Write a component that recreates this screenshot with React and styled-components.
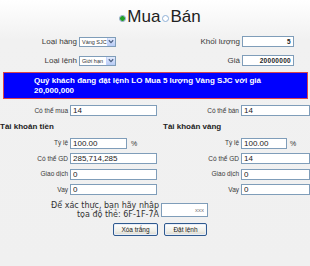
import React from 'react';
import styled, { createGlobalStyle } from 'styled-components';

const Global = createGlobalStyle`
  html, body { margin: 0; padding: 0; }
  body {
    width: 310px;
    height: 266px;
    overflow: hidden;
    background: linear-gradient(#ffffff 0px, #f1f1f1 40px, #f0f0f0 100%);
    font-family: "Liberation Sans", Arial, sans-serif;
    color: #333;
  }
`;

const Page = styled.div`
  width: 310px;
  height: 266px;
  display: flex;
  flex-direction: column;
`;

const Title = styled.div`
  display: flex;
  justify-content: center;
  align-items: baseline;
  box-sizing: border-box;
  height: 27px;
  padding: 8px 0 0 8px;
  font-size: 17px;
  line-height: 18px;
  color: #222;
`;

const Radio = styled.span`
  display: inline-block;
  box-sizing: border-box;
  width: 7px;
  height: 7px;
  margin: 0 1px 0 2px;
  border-radius: 50%;
  border: 1px solid ${p => (p.$checked ? '#7f9db9' : '#8fb0d6')};
  background: ${p => (p.$checked ? 'radial-gradient(circle, #21a121 0 2.2px, #eaf6ea 2.5px)' : '#fff')};
`;

const TopGrid = styled.div`
  display: grid;
  grid-template-columns: 77px 37px 122px 52px;
  column-gap: 2px;
  row-gap: 8px;
  align-items: center;
  margin-top: 9px;
`;

const Label = styled.span`
  text-align: right;
  font-size: ${p => p.$size || 8}px;
  line-height: 10px;
  color: #3a3a3a;
  white-space: nowrap;
`;

const SelectBox = styled.div`
  display: flex;
  box-sizing: border-box;
  width: 37px;
  height: 10px;
  border: 1px solid #7f9db9;
  background: #fff;
`;

const SelectText = styled.span`
  flex: 1;
  padding-left: 2px;
  font-size: 5.5px;
  line-height: 8px;
  color: #333;
  white-space: nowrap;
`;

const SelectArrow = styled.span`
  display: flex;
  align-items: center;
  justify-content: center;
  width: 8px;
  background: linear-gradient(#e3ebfd, #b7cbf5);
  border-left: 1px solid #c3d3fd;
`;

const Field = styled.input`
  box-sizing: border-box;
  width: ${p => p.$w || '100%'};
  height: 11px;
  margin: 0;
  padding: 0 2px;
  border: 1px solid #7f9db9;
  background: #fff;
  font-family: "Liberation Sans", Arial, sans-serif;
  font-size: ${p => p.$size || 8}px;
  font-weight: ${p => (p.$bold ? 700 : 400)};
  letter-spacing: ${p => (p.$bold ? '0.3px' : '0')};
  line-height: 9px;
  text-align: ${p => (p.$right ? 'right' : 'left')};
  color: #222;
  outline: none;
`;

const Banner = styled.div`
  box-sizing: border-box;
  height: 27px;
  margin: 6px 2px 0 3px;
  padding: 3px 30px 0 30px;
  border: 1px solid #d9464a;
  background: #0000ff;
  color: #fff;
  font-weight: 700;
  font-size: 8px;
  line-height: 10px;
`;

const Columns = styled.div`
  display: grid;
  grid-template-columns: 157px 153px;
  margin-top: 6px;
`;

const Panel = styled.div`
  display: flex;
  flex-direction: column;
  gap: 4.5px;
`;

const Heading = styled.div`
  margin: 1.5px 0 1px ${p => p.$indent || 0}px;
  font-size: 8px;
  line-height: 10px;
  font-weight: 700;
  color: #222;
`;

const Row = styled.div`
  display: grid;
  grid-template-columns: ${p => p.$labelW}px 1fr;
  column-gap: 2px;
  align-items: center;
`;

const FieldWithUnit = styled.div`
  display: flex;
  align-items: center;
  gap: ${p => p.$gap || 3}px;
`;

const Unit = styled.span`
  font-size: 7px;
  color: #333;
`;

const VerifyRow = styled.div`
  display: grid;
  grid-template-columns: 159px 47px;
  column-gap: 2px;
  align-items: center;
  margin-top: 6px;
`;

const VerifyText = styled.div`
  text-align: right;
  font-family: "DejaVu Sans", Verdana, sans-serif;
  font-size: 8px;
  line-height: 9px;
  color: #333;
`;

const CodeField = styled.input`
  box-sizing: border-box;
  width: 47px;
  height: 14px;
  margin: 0;
  padding: 0 3px;
  border: 1px solid #7f9db9;
  background: #fff;
  font-family: "Liberation Sans", Arial, sans-serif;
  font-size: 6px;
  text-align: right;
  color: #777;
  outline: none;
`;

const Buttons = styled.div`
  display: flex;
  gap: 6px;
  padding-left: 113px;
  margin-top: 4px;
`;

const Button = styled.button`
  box-sizing: border-box;
  width: ${p => p.$w}px;
  height: 13px;
  margin: 0;
  padding: 0;
  border: 1px solid #2f5a8f;
  border-radius: 2px;
  background: linear-gradient(#ffffff, #f0f0ea 60%, #dcdad0);
  box-shadow: inset 0 0 0 1px #e9eef8;
  font-family: "Liberation Sans", Arial, sans-serif;
  font-size: 6.5px;
  line-height: 11px;
  color: #222;
`;

const Arrow = () => (
  <svg width="6" height="5" viewBox="0 0 6 5">
    <path d="M0.8 1.2 L3 3.6 L5.2 1.2" fill="none" stroke="#4d6185" strokeWidth="1.3" />
  </svg>
);

const Select = ({ text }) => (
  <SelectBox>
    <SelectText>{text}</SelectText>
    <SelectArrow>
      <Arrow />
    </SelectArrow>
  </SelectBox>
);

export default function App() {
  return (
    <Page>
      <Global />
      <Title>
        <Radio $checked />
        <span>Mua</span>
        <Radio />
        <span>Bán</span>
      </Title>

      <TopGrid>
        <Label>Loại hàng</Label>
        <Select text="Vàng SJC" />
        <Label>Khối lượng</Label>
        <Field readOnly value="5" $right $bold $size={6.5} />
        <Label>Loại lệnh</Label>
        <Select text="Giới hạn" />
        <Label>Giá</Label>
        <Field readOnly value="20000000" $right $bold $size={6.5} />
      </TopGrid>

      <Banner>Quý khách đang đặt lệnh LO Mua 5 lượng Vàng SJC với giá 20,000,000</Banner>

      <Columns>
        <Panel>
          <Row $labelW={68}>
            <Label $size={6.5}>Có thể mua</Label>
            <Field readOnly value="14" />
          </Row>
          <Heading>Tài khoản tiền</Heading>
          <Row $labelW={68}>
            <Label $size={6.5}>Tỷ lệ</Label>
            <FieldWithUnit $gap={4}>
              <Field readOnly value="100.00" $w="57px" />
              <Unit>%</Unit>
            </FieldWithUnit>
          </Row>
          <Row $labelW={68}>
            <Label $size={6.5}>Có thể GD</Label>
            <Field readOnly value="285,714,285" />
          </Row>
          <Row $labelW={68}>
            <Label $size={6.5}>Giao dịch</Label>
            <Field readOnly value="0" />
          </Row>
          <Row $labelW={68}>
            <Label $size={6.5}>Vay</Label>
            <Field readOnly value="0" />
          </Row>
        </Panel>
        <Panel>
          <Row $labelW={82}>
            <Label $size={6.5}>Có thể bán</Label>
            <Field readOnly value="14" />
          </Row>
          <Heading $indent={6}>Tài khoản vàng</Heading>
          <Row $labelW={82}>
            <Label $size={6.5}>Tỷ lệ</Label>
            <FieldWithUnit $gap={3}>
              <Field readOnly value="100.00" $w="46px" />
              <Unit>%</Unit>
            </FieldWithUnit>
          </Row>
          <Row $labelW={82}>
            <Label $size={6.5}>Có thể GD</Label>
            <Field readOnly value="14" />
          </Row>
          <Row $labelW={82}>
            <Label $size={6.5}>Giao dịch</Label>
            <Field readOnly value="0" />
          </Row>
          <Row $labelW={82}>
            <Label $size={6.5}>Vay</Label>
            <Field readOnly value="0" />
          </Row>
        </Panel>
      </Columns>

      <VerifyRow>
        <VerifyText>
          Để xác thực, bạn hãy nhập
          <br />
          tọa độ thẻ: 6F-1F-7A
        </VerifyText>
        <CodeField readOnly value="xxx" />
      </VerifyRow>

      <Buttons>
        <Button $w={45}>Xóa trắng</Button>
        <Button $w={43}>Đặt lệnh</Button>
      </Buttons>
    </Page>
  );
}
